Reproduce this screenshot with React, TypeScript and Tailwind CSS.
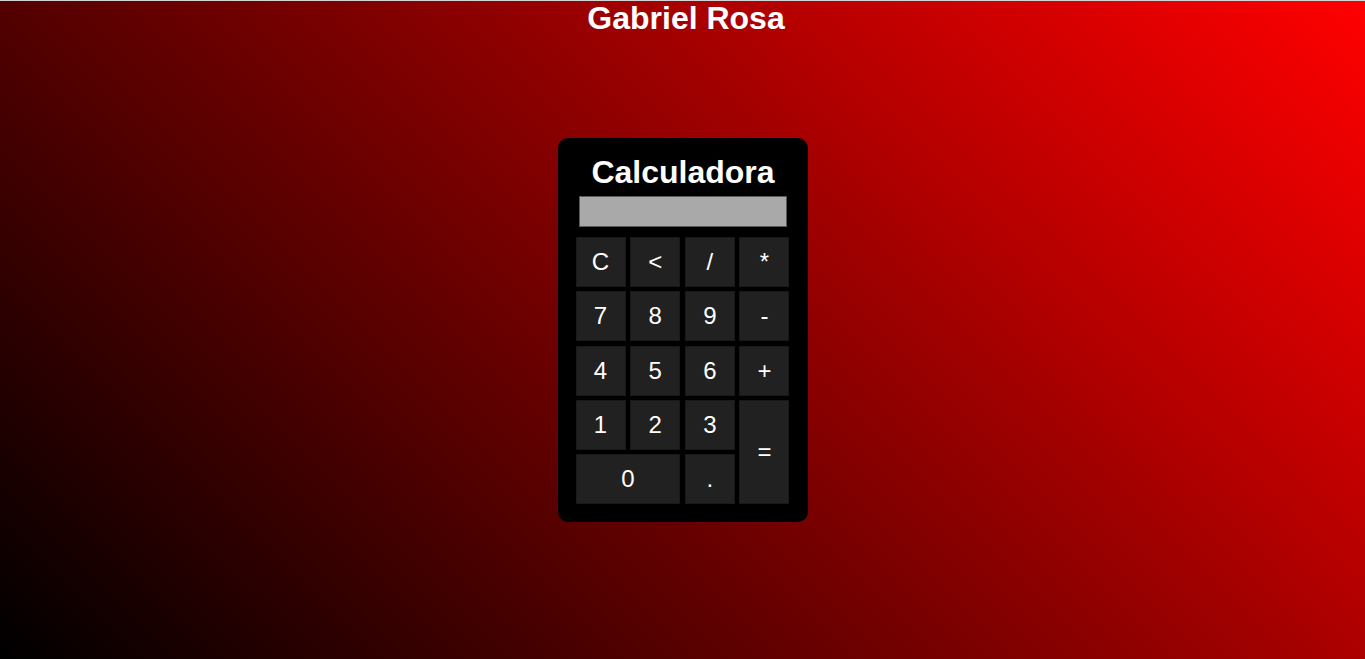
import React from 'react';

type Key = { label: string; className?: string };

const keys: Key[] = [
  { label: 'C' },
  { label: '<' },
  { label: '/' },
  { label: '*' },
  { label: '7' },
  { label: '8' },
  { label: '9' },
  { label: '-' },
  { label: '4' },
  { label: '5' },
  { label: '6' },
  { label: '+' },
  { label: '1' },
  { label: '2' },
  { label: '3' },
  { label: '=', className: 'row-span-2' },
  { label: '0', className: 'col-span-2' },
  { label: '.' },
];

export default function App() {
  return (
    <div
      className="min-h-screen border-t border-[#d4d4d4] bg-[linear-gradient(45deg,#000000,#ff0000)] text-white"
      style={{ fontFamily: '"Liberation Sans", Arial, sans-serif' }}
    >
      <h1 className="-mt-px pl-[7px] text-center text-[32px] font-bold leading-[37px]">Gabriel Rosa</h1>

      <div className="mx-auto mt-[101px] w-[250px] rounded-[10px] bg-black px-[18px] pt-[16px] pb-[18px]">
        <h2 className="mb-[5px] pl-[1px] text-center text-[32px] font-bold leading-[37px]">Calculadora</h2>
        <div className="mx-auto mb-[10px] h-[31px] w-[208px] border border-[#5a5a5a] bg-[#a9a9a9]"></div>
        <div className="grid grid-cols-[repeat(4,50px)] auto-rows-[50px] gap-x-[4.67px] gap-y-[4.33px]">
          {keys.map((k) => (
            <button
              key={k.label}
              className={`flex items-center justify-center border border-[#191919] bg-[#212121] text-[24px] text-white ${k.className ?? ''}`}
            >
              {k.label}
            </button>
          ))}
        </div>
      </div>
    </div>
  );
}
